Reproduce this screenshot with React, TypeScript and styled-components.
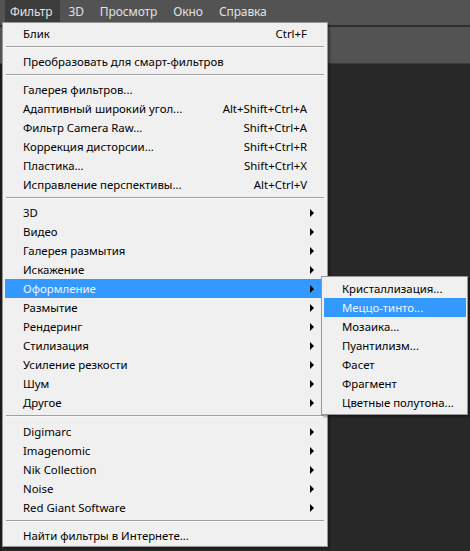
import React from "react";
import styled, { createGlobalStyle } from "styled-components";

const Global = createGlobalStyle`
  html, body { margin: 0; padding: 0; background: #282828; }
  body { font-family: "Noto Sans", "Segoe UI", sans-serif; }
`;

const Screen = styled.div`
  position: relative;
  width: 470px;
  height: 551px;
  overflow: hidden;
  display: flex;
  flex-direction: column;
  background: #282828;
`;

const MenuBar = styled.div`
  height: 25px;
  flex: none;
  display: flex;
  align-items: stretch;
  padding-left: 5px;
  background: #535353;
  border-bottom: 2px solid #2e2e2e;
`;

const BarItem = styled.div<{ $active?: boolean }>`
  display: flex;
  align-items: center;
  padding: ${(p) => (p.$active ? "0 8px 0 5px" : "0 8px")};
  background: ${(p) => (p.$active ? "#3c3c3c" : "transparent")};
  color: #e2e2e2;
  font-size: 12px;
  letter-spacing: -0.1px;
  height: 22px;
`;

const OptionsBar = styled.div`
  height: 36px;
  flex: none;
  background: #535353;
  border-bottom: 1px solid #3a3a3a;
`;

const Workspace = styled.div`
  flex: 1;
  background: #282828;
  border-left: 2px solid #1f1a1a;
`;

const Panel = styled.div`
  position: absolute;
  background: #f0f0f0;
  border: 1px solid #979797;
  box-shadow: 2px 2px 2px rgba(0, 0, 0, 0.35);
  padding: 1px 0;
  box-sizing: border-box;
  font-size: 11.4px;
  color: #000;
`;

const MainMenu = styled(Panel)`
  left: 2px;
  top: 22px;
  width: 326px;
`;

const SubMenu = styled(Panel)`
  left: 321px;
  top: 276px;
  width: 147px;
  padding: 2px 0;
`;

const Row = styled.div<{ $hl?: boolean; $sub?: boolean }>`
  height: 19px;
  display: flex;
  align-items: center;
  margin: ${(p) => (p.$sub ? "0 1px 0 2px" : "0 2px")};
  padding-left: 18px;
  padding-right: 10px;
  background: ${(p) => (p.$hl ? "#3399ff" : "transparent")};
  color: ${(p) => (p.$hl ? "#eef5ff" : "#000")};
  white-space: nowrap;
`;

const Label = styled.span`
  flex: 1;
`;

const Shortcut = styled.span`
  margin-right: 8px;
`;

const Arrow = styled.span`
  width: 0;
  height: 0;
  border-top: 4px solid transparent;
  border-bottom: 4px solid transparent;
  border-left: 4px solid #000;
  margin-right: 1px;
`;

const Sep = styled.div<{ $h?: number }>`
  height: ${(p) => p.$h ?? 9}px;
  box-sizing: border-box;
  padding-top: 3px;
  margin: 0 3px;
  &::before {
    content: "";
    display: block;
    height: 1px;
    background: #a0a0a0;
    border-bottom: 1px solid #fafafa;
  }
`;

type Item = { t: string; k?: string; sub?: boolean; hl?: boolean };

const g3: Item[] = [
  { t: "3D", sub: true },
  { t: "Видео", sub: true },
  { t: "Галерея размытия", sub: true },
  { t: "Искажение", sub: true },
  { t: "Оформление", sub: true, hl: true },
  { t: "Размытие", sub: true },
  { t: "Рендеринг", sub: true },
  { t: "Стилизация", sub: true },
  { t: "Усиление резкости", sub: true },
  { t: "Шум", sub: true },
  { t: "Другое", sub: true },
];

const g2: Item[] = [
  { t: "Галерея фильтров..." },
  { t: "Адаптивный широкий угол...", k: "Alt+Shift+Ctrl+A" },
  { t: "Фильтр Camera Raw...", k: "Shift+Ctrl+A" },
  { t: "Коррекция дисторсии...", k: "Shift+Ctrl+R" },
  { t: "Пластика...", k: "Shift+Ctrl+X" },
  { t: "Исправление перспективы...", k: "Alt+Ctrl+V" },
];

const g4: Item[] = [
  { t: "Digimarc", sub: true },
  { t: "Imagenomic", sub: true },
  { t: "Nik Collection", sub: true },
  { t: "Noise", sub: true },
  { t: "Red Giant Software", sub: true },
];

const subItems = [
  "Кристаллизация...",
  "Меццо-тинто...",
  "Мозаика...",
  "Пуантилизм...",
  "Фасет",
  "Фрагмент",
  "Цветные полутона...",
];

const MenuRow = ({ it }: { it: Item }) => (
  <Row $hl={it.hl}>
    <Label>{it.t}</Label>
    {it.k && <Shortcut>{it.k}</Shortcut>}
    {it.sub && <Arrow />}
  </Row>
);

export default function App() {
  return (
    <>
      <Global />
      <Screen>
        <MenuBar>
          <BarItem $active>Фильтр</BarItem>
          <BarItem>3D</BarItem>
          <BarItem>Просмотр</BarItem>
          <BarItem>Окно</BarItem>
          <BarItem>Справка</BarItem>
        </MenuBar>
        <OptionsBar />
        <Workspace />
        <MainMenu>
          <MenuRow it={{ t: "Блик", k: "Ctrl+F" }} />
          <Sep />
          <MenuRow it={{ t: "Преобразовать для смарт-фильтров" }} />
          <Sep />
          {g2.map((it) => (
            <MenuRow key={it.t} it={it} />
          ))}
          <Sep />
          {g3.map((it) => (
            <MenuRow key={it.t} it={it} />
          ))}
          <Sep $h={10} />
          {g4.map((it) => (
            <MenuRow key={it.t} it={it} />
          ))}
          <Sep />
          <MenuRow it={{ t: "Найти фильтры в Интернете..." }} />
        </MainMenu>
        <SubMenu>
          {subItems.map((s, i) => (
            <Row key={s} $sub $hl={i === 1}>
              <Label>{s}</Label>
            </Row>
          ))}
        </SubMenu>
      </Screen>
    </>
  );
}
